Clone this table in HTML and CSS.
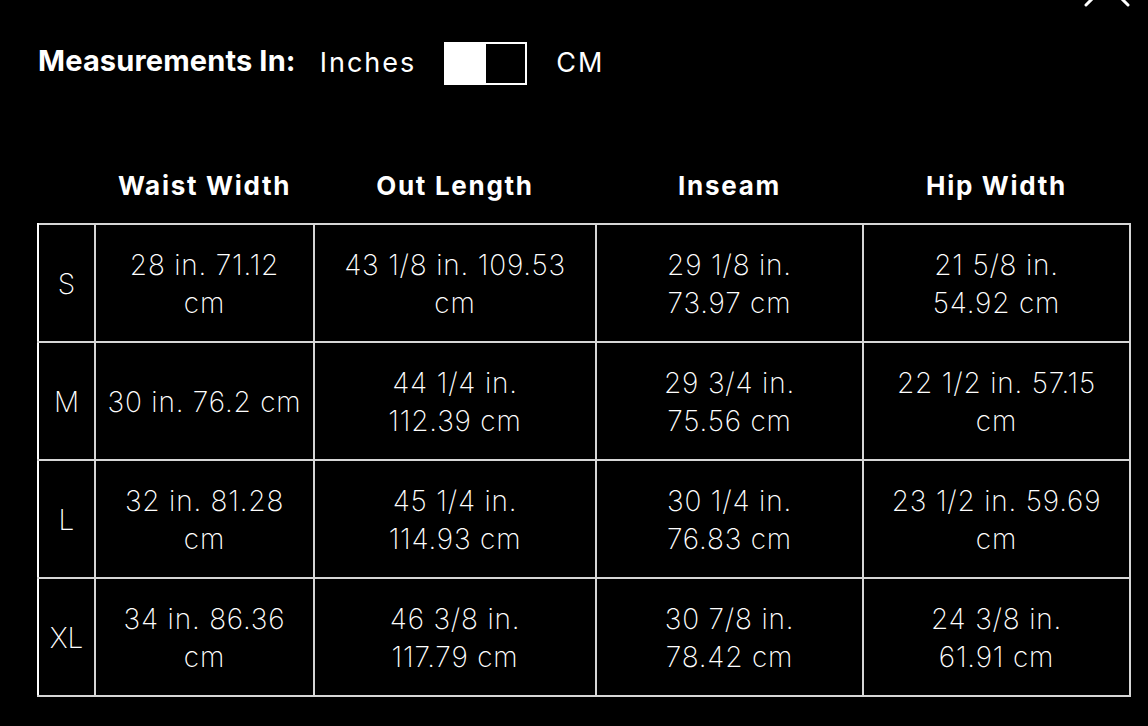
FILE: index.html
```html
<!DOCTYPE html>
<html lang="en">
<head>
<meta charset="utf-8">
<title>Size Chart</title>
<link rel="stylesheet" href="styles.css">
</head>
<body>
<div class="modal">
  <button class="close" aria-label="Close">
    <svg width="48" height="48" viewBox="0 0 48 48"><path d="M3 3 L45 45 M45 3 L3 45" stroke="#fff" stroke-width="3" stroke-linecap="round" fill="none"/></svg>
  </button>
  <div class="units">
    <span class="units-label">Measurements In:</span>
    <span class="unit unit-in">Inches</span>
    <span class="toggle"><span class="knob"></span></span>
    <span class="unit unit-cm">CM</span>
  </div>
  <table class="chart">
    <colgroup>
      <col class="c-size"><col class="c-waist"><col class="c-out"><col class="c-inseam"><col class="c-hip">
    </colgroup>
    <thead>
      <tr><th></th><th>Waist Width</th><th>Out Length</th><th>Inseam</th><th>Hip Width</th></tr>
    </thead>
    <tbody>
      <tr><td>S</td><td>28 in. 71.12<br>cm</td><td>43 1/8 in. 109.53<br>cm</td><td>29 1/8 in.<br>73.97 cm</td><td>21 5/8 in.<br>54.92 cm</td></tr>
      <tr><td>M</td><td>30 in. 76.2 cm</td><td>44 1/4 in.<br>112.39 cm</td><td>29 3/4 in.<br>75.56 cm</td><td>22 1/2 in. 57.15<br>cm</td></tr>
      <tr><td>L</td><td>32 in. 81.28<br>cm</td><td>45 1/4 in.<br>114.93 cm</td><td>30 1/4 in.<br>76.83 cm</td><td>23 1/2 in. 59.69<br>cm</td></tr>
      <tr><td>XL</td><td>34 in. 86.36<br>cm</td><td>46 3/8 in.<br>117.79 cm</td><td>30 7/8 in.<br>78.42 cm</td><td>24 3/8 in.<br>61.91 cm</td></tr>
    </tbody>
  </table>
</div>
</body>
</html>
```
FILE: styles.css
```css
html, body {
  margin: 0;
  padding: 0;
  background: #000;
}
body {
  width: 1148px;
  height: 726px;
  overflow: hidden;
  color: #fff;
  font-family: Inter, Roboto, "Liberation Sans", sans-serif;
}
.modal {
  position: relative;
  padding: 42px 0 0 37px;
}
.close {
  position: absolute;
  top: -40px;
  right: 17px;
  background: none;
  border: 0;
  padding: 0;
  line-height: 0;
}
.units {
  display: flex;
  align-items: center;
  height: 43px;
}
.units-label {
  font-weight: 700;
  font-size: 29px;
  letter-spacing: 0.15px;
  margin: 0 0 7px 1px;
}
.unit {
  font-size: 27px;
  font-weight: 400;
  letter-spacing: 2px;
  margin-bottom: 2px;
}
.unit-in {
  margin-left: 24px;
}
.toggle {
  display: flex;
  width: 83px;
  height: 43px;
  box-sizing: border-box;
  border: 2px solid #fff;
  margin: 0 29px 0 28px;
}
.knob {
  width: 40px;
  background: #fff;
}
.chart {
  margin-top: 62px;
  border-collapse: collapse;
  table-layout: fixed;
  width: 1092px;
}
.c-size { width: 57px; }
.c-waist { width: 219px; }
.c-out { width: 282px; }
.c-inseam { width: 267px; }
.c-hip { width: 267px; }
.chart th {
  font-size: 26px;
  font-weight: 700;
  letter-spacing: 1.7px;
  height: 76px;
  padding: 0;
  text-align: center;
  vertical-align: middle;
}
.chart td {
  border: 2px solid #d6d6d6;
  font-size: 28px;
  font-weight: 250;
  letter-spacing: 0.8px;
  line-height: 38px;
  height: 118px;
  padding: 2px 0 0;
  box-sizing: border-box;
  white-space: nowrap;
  text-align: center;
  vertical-align: middle;
}
.chart td:first-child {
  border-left-color: #fff;
  letter-spacing: 0;
}
```
